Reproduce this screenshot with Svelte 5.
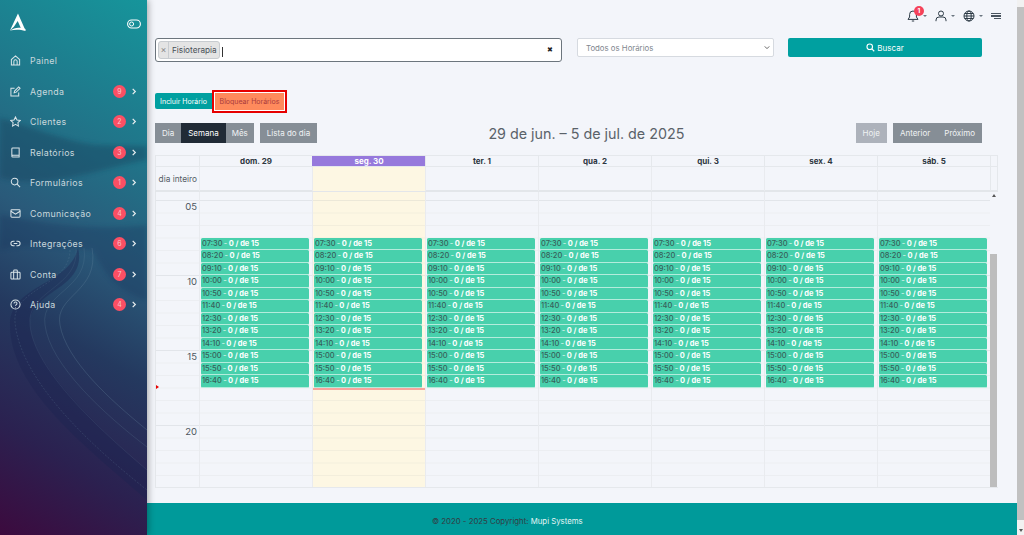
<script>
  const menu = [
    { label: "Painel", icon: "home" },
    { label: "Agenda", icon: "edit", badge: 9 },
    { label: "Clientes", icon: "star", badge: 2 },
    { label: "Relatórios", icon: "book", badge: 3 },
    { label: "Formulários", icon: "search", badge: 1 },
    { label: "Comunicação", icon: "mail", badge: 4 },
    { label: "Integrações", icon: "link", badge: 6 },
    { label: "Conta", icon: "case", badge: 7 },
    { label: "Ajuda", icon: "help", badge: 4 }
  ];

  const days = ["dom. 29", "seg. 30", "ter. 1", "qua. 2", "qui. 3", "sex. 4", "sáb. 5"];
  const times = ["07:30", "08:20", "09:10", "10:00", "10:50", "11:40", "12:30", "13:20", "14:10", "15:00", "15:50", "16:40"];
  const hours = ["05", "10", "15", "20"];
</script>

<div class="page">
  <aside class="sidebar">
    <svg class="art" viewBox="0 0 147 535" preserveAspectRatio="none" aria-hidden="true">
      <defs>
        <filter id="soft"><feGaussianBlur stdDeviation="2.5" /></filter>
      </defs>
      <path d="M0 118 C30 126 60 140 95 145 L147 146 L147 160 C100 168 50 190 0 178 Z" fill="#14405c" opacity="0.4" filter="url(#soft)" />
      <path d="M0 215 C40 222 90 232 147 225 L147 300 C110 290 100 262 92 250 C70 250 30 240 0 250 Z" fill="#17305a" opacity="0.3" filter="url(#soft)" />
      <path d="M78 248 C88 290 28 290 30 325 C32 365 100 430 147 470 L147 500 C90 450 10 390 10 325 C10 285 70 285 78 248 Z" fill="#1b2350" opacity="0.4" />
      <path d="M92 248 C100 292 54 295 60 325 C66 360 110 400 147 430" fill="none" stroke="#6a8aa0" stroke-width="0.8" opacity="0.35" />
      <path d="M84 248 C90 290 40 292 45 325 C50 365 105 415 147 447" fill="none" stroke="#6a8aa0" stroke-width="0.8" opacity="0.25" />
      <path d="M76 248 C80 288 26 290 30 325 C34 370 100 430 147 470" fill="none" stroke="#6a8aa0" stroke-width="0.7" opacity="0.2" />
      <path d="M70 250 C70 286 12 288 15 322 C20 380 90 445 147 490" fill="none" stroke="#6a8aa0" stroke-width="1" stroke-dasharray="2 1.5" opacity="0.22" />
    </svg>
    <div class="brand">
      <svg class="logo" viewBox="0 0 18 20" aria-hidden="true">
        <path d="M9.5 0.5 L17 17.5 L13.2 17.5 L9.2 8.5 L5.2 14.5 L1 18.5 Z" fill="#fff" />
        <path d="M1 18.5 C6 15 11 14.5 17.5 17 L17.5 19 C11 17 6 17.5 1 18.5 Z" fill="#fff" />
      </svg>
      <svg class="toggle" viewBox="0 0 14 10" aria-hidden="true">
        <rect x="0.6" y="1" width="12.8" height="8" rx="4" fill="none" stroke="#fff" stroke-width="1.1" />
        <circle cx="4.6" cy="5" r="2" fill="none" stroke="#fff" stroke-width="1" />
      </svg>
    </div>
    <nav class="menu">
      {#each menu as item}
        <div class="item">
          <svg class="icon" viewBox="0 0 12 12" aria-hidden="true">
            {#if item.icon === "home"}
              <path d="M1.5 11 V5 L6 1 L10.5 5 V11 Z M4.2 11 V7 a1.8 1.8 0 0 1 3.6 0 V11" />
            {:else if item.icon === "edit"}
              <path d="M9.5 7 V11 H1 V2.5 H5 M4.5 7.5 L5 5.5 L9.5 1 L11 2.5 L6.5 7 Z" />
            {:else if item.icon === "star"}
              <path d="M6 1 L7.6 4.3 L11.2 4.8 L8.6 7.3 L9.2 11 L6 9.2 L2.8 11 L3.4 7.3 L0.8 4.8 L4.4 4.3 Z" />
            {:else if item.icon === "book"}
              <path d="M2 10 V2 a1 1 0 0 1 1 -1 H10 V11 H3 a1 1 0 0 1 -1 -1 a1 1 0 0 1 1 -1 H10" />
            {:else if item.icon === "search"}
              <circle cx="5" cy="5" r="3.6" /><path d="M7.8 7.8 L11 11" />
            {:else if item.icon === "mail"}
              <rect x="1" y="2" width="10" height="8" rx="1" /><path d="M1 3.5 L6 6.8 L11 3.5" />
            {:else if item.icon === "link"}
              <path d="M5 3.5 H3.5 a2.5 2.5 0 0 0 0 5 H5 M7 3.5 H8.5 a2.5 2.5 0 0 1 0 5 H7 M4 6 H8" />
            {:else if item.icon === "case"}
              <rect x="1" y="3.5" width="10" height="7.5" rx="1" /><path d="M4 11 V2 a1 1 0 0 1 1 -1 H7 a1 1 0 0 1 1 1 V11" />
            {:else}
              <circle cx="6" cy="6" r="5" /><path d="M4.4 4.8 a1.6 1.6 0 1 1 2.4 1.4 Q6 6.6 6 7.4 M6 8.6 V9.2" />
            {/if}
          </svg>
          <span class="label">{item.label}</span>
          {#if item.badge}
            <span class="count">{item.badge}</span>
            <svg class="chev" viewBox="0 0 6 8" aria-hidden="true"><path d="M1.5 1 L4.5 4 L1.5 7" /></svg>
          {/if}
        </div>
      {/each}
    </nav>
  </aside>

  <div class="main">
    <div class="content">
      <header class="topbar">
        <span class="top-item bell">
          <svg viewBox="0 0 12 12" aria-hidden="true"><path d="M6 1 a3.4 3.4 0 0 1 3.4 3.4 V7 L11 9.4 H1 L2.6 7 V4.4 A3.4 3.4 0 0 1 6 1 Z M4.8 11 H7.2" /></svg>
          <span class="bell-count">1</span>
          <i class="caret"></i>
        </span>
        <span class="top-item">
          <svg viewBox="0 0 12 12" aria-hidden="true"><circle cx="6" cy="3.5" r="2.5" /><path d="M1 11.2 V10 a3 3 0 0 1 3 -3 H8 a3 3 0 0 1 3 3 V11.2" /></svg>
          <i class="caret"></i>
        </span>
        <span class="top-item">
          <svg viewBox="0 0 12 12" aria-hidden="true"><circle cx="6" cy="6" r="5" /><ellipse cx="6" cy="6" rx="2.2" ry="5" /><path d="M1 6 H11 M1.8 3.5 H10.2 M1.8 8.5 H10.2" /></svg>
          <i class="caret"></i>
        </span>
        <span class="lines"><i></i><i></i><i></i></span>
      </header>

      <div class="filters">
        <div class="multi">
          <span class="tag"><span class="tag-x">×</span><span class="tag-text">Fisioterapia</span></span>
          <span class="cursor"></span>
          <span class="clear">✖</span>
        </div>
        <div class="select">
          <span>Todos os Horários</span>
          <svg viewBox="0 0 8 6" aria-hidden="true"><path d="M1 1.5 L4 4.5 L7 1.5" /></svg>
        </div>
        <button class="search-btn">
          <svg viewBox="0 0 12 12" aria-hidden="true"><circle cx="5" cy="5" r="3.7" /><path d="M7.8 7.8 L11 11" /></svg>
          Buscar
        </button>
      </div>

      <div class="actions">
        <button class="include">Incluir Horário</button>
        <button class="block">Bloquear Horários</button>
      </div>

      <div class="toolbar">
        <div class="group-left">
          <div class="group">
            <button class="gray">Dia</button>
            <button class="gray active">Semana</button>
            <button class="gray tight">Mês</button>
          </div>
          <button class="gray">Lista do dia</button>
        </div>
        <h2>29 de jun. – 5 de jul. de 2025</h2>
        <div class="group-right">
          <button class="gray faded">Hoje</button>
          <div class="group">
            <button class="gray">Anterior</button>
            <button class="gray">Próximo</button>
          </div>
        </div>
      </div>

      <div class="calendar">
        <div class="head">
          <div class="axis-cell"></div>
          {#each days as day, i}
            <div class="day-head" class:today={i === 1}>{day}</div>
          {/each}
          <div class="gutter"></div>
        </div>
        <div class="allday">
          <div class="axis-cell allday-label">dia inteiro</div>
          {#each days as day, i}
            <div class="allday-cell" class:today-bg={i === 1}></div>
          {/each}
          <div class="gutter"></div>
        </div>
        <div class="grid">
          <div class="axis">
            {#each hours as hour}
              <div class="hour">{hour}</div>
            {/each}
            <span class="arrow"></span>
          </div>
          {#each days as day, i}
            <div class="col" class:today-bg={i === 1}>
              {#each times as time}
                <div class="event"><span class="time">{time}</span> - <b>0 / de 15</b></div>
              {/each}
              {#if i === 1}<div class="now"></div>{/if}
            </div>
          {/each}
          <div class="scroll">
            <i class="up"></i>
            <div class="thumb"></div>
            <i class="down"></i>
          </div>
        </div>
      </div>
    </div>
    <footer class="footer">© 2020 - 2025 Copyright: <span>Mupi Systems</span></footer>
  </div>

  <div class="page-scroll">
    <div class="page-thumb"></div>
    <i class="page-down"></i>
  </div>
</div>

<style>
  :global(body) {
    margin: 0;
    background: #f3f5fa;
  }

  .page {
    display: flex;
    width: 1024px;
    height: 535px;
    overflow: hidden;
    font-family: Inter, "Liberation Sans", sans-serif;
  }

  button {
    font-family: inherit;
    border: 0;
    margin: 0;
    cursor: pointer;
  }

  .sidebar {
    position: relative;
    flex: 0 0 147px;
    height: 535px;
    background: linear-gradient(210deg, #16959b 0%, #20768a 25%, #2a5a7a 45%, #24395f 62%, #2b2150 82%, #3c0a3e 100%);
    box-shadow: 1px 0 7px rgba(0, 0, 0, 0.35);
    z-index: 2;
    color: #c9d8dd;
  }

  .art {
    position: absolute;
    inset: 0;
    width: 100%;
    height: 100%;
  }

  .brand {
    position: relative;
    display: flex;
    align-items: center;
    justify-content: space-between;
    height: 45.5px;
    padding: 0 6px 0 9px;
  }

  .logo {
    width: 17px;
    height: 19px;
  }

  .toggle {
    width: 14px;
    height: 10px;
    margin-top: 2px;
  }

  .menu {
    position: relative;
  }

  .item {
    display: flex;
    align-items: center;
    height: 30.5px;
    padding: 0 0 0 10px;
    font-size: 8.8px;
    letter-spacing: 0.35px;
  }

  .icon {
    flex: 0 0 11px;
    width: 11px;
    height: 11px;
    margin-right: 9px;
    fill: none;
    stroke: #dbe5e9;
    stroke-width: 1.1;
  }

  .label {
    flex: 1;
  }

  .count {
    width: 13px;
    height: 13px;
    border-radius: 50%;
    background: #fb4f64;
    color: #f9c6cd;
    font-size: 7px;
    letter-spacing: 0;
    text-align: center;
    line-height: 13px;
    margin-right: 5px;
  }

  .chev {
    width: 6px;
    height: 7px;
    margin-right: 10px;
    fill: none;
    stroke: #e8eef0;
    stroke-width: 1.4;
  }

  .main {
    flex: 1;
    display: flex;
    flex-direction: column;
    min-width: 0;
  }

  .content {
    flex: 1;
    min-height: 0;
    padding: 0 18px 0 8px;
  }

  .topbar {
    display: flex;
    justify-content: flex-end;
    align-items: center;
    height: 32px;
    padding-right: 8px;
    margin-right: -10px;
    gap: 8px;
  }

  .top-item {
    position: relative;
    display: flex;
    align-items: center;
    gap: 4px;
  }

  .top-item svg {
    width: 12px;
    height: 12px;
    fill: none;
    stroke: #2c3a45;
    stroke-width: 1;
  }

  .bell-count {
    position: absolute;
    left: 7px;
    top: -4px;
    width: 10px;
    height: 10px;
    border-radius: 50%;
    background: #f5425a;
    color: #fff;
    font-size: 6.5px;
    font-weight: 700;
    text-align: center;
    line-height: 10px;
  }

  .caret {
    width: 0;
    height: 0;
    border: 2px solid transparent;
    border-top: 2.5px solid #6b7680;
    border-bottom: 0;
  }

  .lines {
    display: flex;
    flex-direction: column;
    gap: 1px;
    width: 10px;
  }

  .lines i {
    height: 1.5px;
    background: #4a5560;
  }

  .lines i:last-child {
    width: 7px;
    margin-left: 3px;
  }

  .filters {
    display: flex;
    align-items: flex-start;
    margin-top: 6px;
    height: 24px;
  }

  .multi {
    display: flex;
    align-items: center;
    width: 407px;
    height: 24px;
    box-sizing: border-box;
    border: 1px solid #6c757d;
    border-radius: 3px;
    background: #fff;
    padding: 0 8px 0 2px;
    margin-right: 15px;
  }

  .tag {
    display: flex;
    align-items: center;
    height: 18px;
    box-sizing: border-box;
    border: 1px solid #c8ccd0;
    border-radius: 3px;
    background: #e4e4e4;
    font-size: 8.2px;
    color: #495057;
  }

  .tag-x {
    width: 9px;
    text-align: center;
    border-right: 1px solid #c8ccd0;
    color: #888;
    font-size: 9px;
    line-height: 16px;
  }

  .tag-text {
    padding: 0 2px 0 3px;
    line-height: 16px;
  }

  .cursor {
    width: 1px;
    height: 10px;
    background: #333;
    margin: 3px 0 0 2px;
  }

  .clear {
    margin-left: auto;
    font-size: 6.5px;
    color: #222;
  }

  .select {
    display: flex;
    align-items: center;
    justify-content: space-between;
    width: 197px;
    height: 19px;
    box-sizing: border-box;
    border: 1px solid #d6dae0;
    border-radius: 2px;
    background: #fff;
    padding: 0 3px 0 8px;
    margin-right: 14px;
    font-size: 7.8px;
    color: #7f878f;
  }

  .select svg {
    width: 6px;
    height: 5px;
    fill: none;
    stroke: #555;
    stroke-width: 1.2;
  }

  .search-btn {
    display: flex;
    align-items: center;
    justify-content: center;
    gap: 2px;
    width: 194px;
    height: 19px;
    border-radius: 2px;
    background: #00a0a0;
    color: #fff;
    font-size: 8px;
  }

  .search-btn svg {
    width: 9px;
    height: 9px;
    fill: none;
    stroke: #fff;
    stroke-width: 1.5;
  }

  .actions {
    display: flex;
    align-items: center;
    height: 22px;
    margin-top: 28px;
  }

  .actions button {
    font-size: 7px;
    height: 16px;
    padding: 0;
  }

  .include {
    width: 57px;
    background: #00a0a0;
    color: #fff;
    border-radius: 2px 0 0 2px;
  }

  .actions .block {
    width: 71px;
    height: 19px;
    margin-left: 2px;
    background: #ff8a5c;
    color: #a93a3c;
    border: 1px solid #fff;
    outline: 2px solid #e60000;
    box-sizing: border-box;
  }

  .toolbar {
    display: flex;
    align-items: center;
    justify-content: space-between;
    height: 20px;
    margin-top: 11px;
    width: 827px;
  }

  .group-left,
  .group-right {
    display: flex;
    gap: 6px;
  }

  .group {
    display: flex;
  }

  .gray {
    height: 20px;
    padding: 0 7px;
    background: #868e96;
    color: #f0f2f4;
    font-size: 8px;
  }

  .tight {
    padding: 0 6px;
  }

  .active {
    background: #212b36;
    color: #fff;
  }

  .faded {
    background: #adb2bb;
  }

  h2 {
    margin: 0;
    font-size: 14.3px;
    font-weight: 400;
    color: #5a6269;
  }

  .calendar {
    width: 843px;
    margin-top: 12px;
    box-sizing: border-box;
    border-bottom: 1px solid #e5e8ec;
  }

  .head,
  .allday,
  .grid {
    display: grid;
    grid-template-columns: 44px repeat(7, 113px) 8px;
  }

  .head {
    height: 10px;
    border-top: 1px solid #e5e8ec;
  }

  .axis-cell {
    border-left: 1px solid #e5e8ec;
  }

  .day-head {
    border-left: 1px solid #e5e8ec;
    font-size: 8px;
    font-weight: 700;
    color: #2d3640;
    text-align: center;
    line-height: 10px;
  }

  .today {
    background: #9679dc;
    border-left-color: #9679dc;
    color: #fff;
  }

  .gutter {
    border-left: 1px solid #e5e8ec;
    border-right: 1px solid #e5e8ec;
  }

  .allday {
    height: 23px;
    border-top: 1px solid #e5e8ec;
    border-bottom: 2px solid #e3e6ea;
  }

  .allday-label {
    font-size: 8.3px;
    color: #555d66;
    line-height: 24px;
    text-align: right;
    padding-right: 2px;
  }

  .allday-cell,
  .col {
    border-left: 1px solid #e9ebef;
  }

  .today-bg {
    background-color: #fdf7e3;
  }

  .grid {
    height: 295px;
    overflow: hidden;
    background-image:
      linear-gradient(#e2e5ea 1px, transparent 1px),
      linear-gradient(#eceef2 1px, transparent 1px);
    background-size: 100% 75px, 100% 12.5px;
    background-position: 0 8px, 0 8px;
  }

  .today-bg.col {
    background-image:
      linear-gradient(#ece8d8 1px, transparent 1px),
      linear-gradient(#f3eedc 1px, transparent 1px);
    background-size: 100% 75px, 100% 12.5px;
    background-position: 0 8px, 0 8px;
  }

  .axis {
    position: relative;
    padding-top: 8px;
    border-left: 1px solid #e5e8ec;
  }

  .hour {
    height: 75px;
    box-sizing: border-box;
    padding: 0 2px 0 0;
    font-size: 9.5px;
    line-height: 13px;
    text-align: right;
    color: #4d555e;
  }

  .arrow {
    position: absolute;
    left: 0;
    top: 193px;
    width: 0;
    height: 0;
    border: 2.5px solid transparent;
    border-left: 3.5px solid #e60000;
    border-right: 0;
  }

  .col {
    position: relative;
    padding: 45.5px 3px 0 1px;
  }

  .event {
    height: 12.5px;
    box-sizing: border-box;
    border-bottom: 1px solid #b4ecdc;
    border-radius: 1.5px;
    background: #48d0ac;
    font-size: 7.5px;
    line-height: 11.5px;
    padding-left: 1px;
    white-space: nowrap;
    overflow: hidden;
    color: #eafaf5;
    word-spacing: -0.8px;
  }

  .event b {
    font-weight: 700;
    color: #fff;
    word-spacing: 0;
  }

  .time {
    color: #37605a;
    font-weight: 500;
  }

  .now {
    position: absolute;
    left: 0;
    right: 0;
    top: 196px;
    height: 2px;
    background: #f7a49c;
  }

  .scroll {
    position: relative;
    background: #f3f5fa;
  }

  .thumb {
    position: absolute;
    left: 0;
    right: 1px;
    top: 62px;
    bottom: 9px;
    background: #bdbdbd;
  }

  .up,
  .down {
    position: absolute;
    left: 2px;
    width: 0;
    height: 0;
    border: 2px solid transparent;
  }

  .up {
    top: 2px;
    border-top: 0;
    border-bottom: 3px solid #555;
  }

  .down {
    bottom: 2px;
    border-bottom: 0;
    border-top: 3px solid #999;
  }

  .footer {
    flex: 0 0 32px;
    box-sizing: border-box;
    padding: 13px 0 0 285px;
    background: #009a9a;
    color: #333c44;
    font-size: 7.8px;
    line-height: 10px;
  }

  .footer span {
    color: #e4f5f5;
  }

  .page-scroll {
    position: relative;
    flex: 0 0 7px;
    background: #f1f1f1;
  }

  .page-thumb {
    position: absolute;
    left: 0;
    right: 0;
    top: 7px;
    bottom: 15px;
    background: #c1c1c1;
  }

  .page-down {
    position: absolute;
    left: 1.5px;
    bottom: 3px;
    width: 0;
    height: 0;
    border: 2px solid transparent;
    border-bottom: 0;
    border-top: 3px solid #555;
  }
</style>
